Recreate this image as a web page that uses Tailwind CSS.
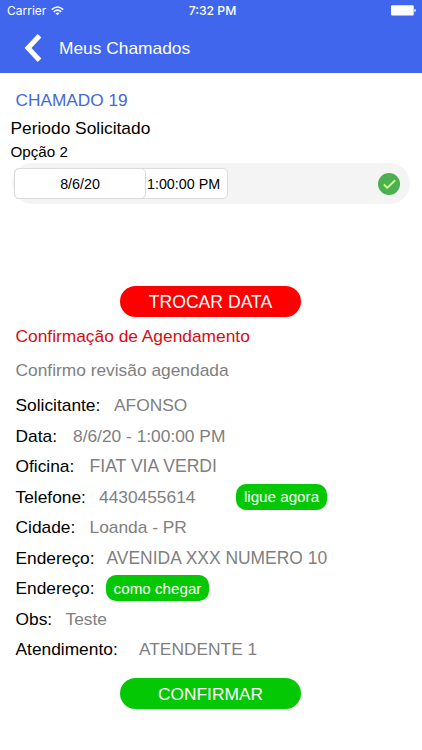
<!DOCTYPE html>
<html lang="pt-BR">
<head>
<meta charset="utf-8">
<meta name="viewport" content="width=device-width, initial-scale=1">
<title>Meus Chamados</title>
<script src="https://cdn.jsdelivr.net/npm/@tailwindcss/browser@4"></script>
</head>
<body class="bg-white font-['Liberation_Sans',Arial,sans-serif] text-[17.35px] text-black overflow-hidden">
<div class="w-[422px] h-[750px] flex flex-col">
  <header class="h-[72.5px] shrink-0 bg-[#4166ee] text-white">
    <div class="h-[22px] grid grid-cols-3 items-center pl-[7px] pr-[6px] font-['Inter',sans-serif] text-[12.2px]">
      <div class="flex items-center gap-[5px]">
        <span class="w-[39px] text-[12px]">Carrier</span>
        <svg class="w-[13px] h-[10px] -mt-px" viewBox="0 0 13 10" fill="none" stroke="currentColor" stroke-width="1.6"><path d="M.8 3.6Q6.5-1.6 12.2 3.6M2.8 5.8Q6.5 2.4 10.2 5.8"/><path d="M6.5 9.2 4.5 7.2Q6.5 5.6 8.5 7.2Z" fill="currentColor" stroke="none"/></svg>
      </div>
      <span class="text-center font-medium whitespace-nowrap pl-[2px]">7:32 PM</span>
      <svg class="w-[25px] h-[11px] -mt-px justify-self-end" viewBox="0 0 25 11" fill="currentColor"><rect x="0" y=".3" width="22.7" height="10.2" rx="1"/><path d="M23.4 3.7q1.5.3 1.5 1.7t-1.5 1.7z"/></svg>
    </div>
    <div class="h-[50px] flex items-center pl-[24px]">
      <svg class="w-[18px] h-[30px] mt-[1px]" viewBox="0 0 18 30" fill="none" stroke="currentColor" stroke-width="5"><path d="M15.5 2.7 4 15 15.5 27.3"/></svg>
      <h1 class="ml-[17px] mt-[2px]">Meus Chamados</h1>
    </div>
  </header>

  <main class="flex flex-col">
    <h2 class="h-[30px] mt-[12.5px] pl-[15.5px] leading-[30px] text-[17.25px] text-[#4568d8]">CHAMADO 19</h2>
    <p class="h-[26px] pl-[10.5px] leading-[26px]">Periodo Solicitado</p>
    <p class="h-[22px] pl-[10.5px] leading-[21.5px] text-[15.2px]">Opção 2</p>
    <div class="mx-[12px] h-[41px] rounded-full bg-[#f4f4f4] flex items-center justify-between pl-[2px] pr-[10px] text-[14.3px]">
      <div class="flex h-[31px] w-[213.5px] rounded-[5px] border border-[#dcdcdc] bg-white">
        <span class="-m-px w-[132px] rounded-[5px] border border-[#dcdcdc] flex items-center justify-center pt-[2px]">8/6/20</span>
        <span class="flex items-center pl-[2px] pt-[2px] whitespace-nowrap">1:00:00 PM</span>
      </div>
      <svg class="w-[22px] h-[22px]" viewBox="0 0 22 22"><circle cx="11" cy="11" r="11" fill="#4caf50"/><path d="m5.8 11.4 3.4 3.5 8-7.6" fill="none" stroke="#ccff90" stroke-width="2"/></svg>
    </div>

    <button class="mt-[82.3px] ml-[120px] w-[181px] h-[30.5px] rounded-full bg-[#ff0000] text-white text-[17.6px] pt-[2px]">TROCAR DATA</button>
    <p class="h-[38px] pl-[15.5px] leading-[38px] text-[#d80b12]">Confirmação de Agendamento</p>
    <p class="h-[35.2px] pl-[15.5px] leading-[31px] text-[#808080]">Confirmo revisão agendada</p>

    <dl class="pl-[15.5px] [&>div]:flex [&>div]:items-center [&>div]:h-[30.5px] [&_dd]:text-[#808080] whitespace-nowrap">
      <div><dt class="w-[98.5px]">Solicitante:</dt><dd>AFONSO</dd></div>
      <div><dt class="w-[57.5px]">Data:</dt><dd>8/6/20 - 1:00:00 PM</dd></div>
      <div><dt class="w-[74px]">Oficina:</dt><dd class="text-[17.6px]">FIAT VIA VERDI</dd></div>
      <div><dt class="w-[83.5px]">Telefone:</dt><dd class="w-[137px]">4430455614</dd><button class="w-[91px] h-[26px] rounded-[10px] bg-[#05c805] text-white text-[15.2px] pt-[2px]">ligue agora</button></div>
      <div><dt class="w-[74px]">Cidade:</dt><dd>Loanda - PR</dd></div>
      <div><dt class="w-[91px]">Endereço:</dt><dd class="text-[17.45px]">AVENIDA XXX NUMERO 10</dd></div>
      <div><dt class="w-[90.5px]">Endereço:</dt><dd><button class="block w-[103px] h-[26px] rounded-[10px] bg-[#05c805] text-white text-[15.2px] pt-[2px]">como chegar</button></dd></div>
      <div><dt class="w-[50px]">Obs:</dt><dd>Teste</dd></div>
      <div><dt class="w-[123.5px]">Atendimento:</dt><dd>ATENDENTE 1</dd></div>
    </dl>
    <button class="mt-[13.8px] ml-[120px] w-[181px] h-[30.5px] rounded-full bg-[#05c805] text-white text-[17.35px] pt-[1px]">CONFIRMAR</button>
  </main>
</div>
</body>
</html>
